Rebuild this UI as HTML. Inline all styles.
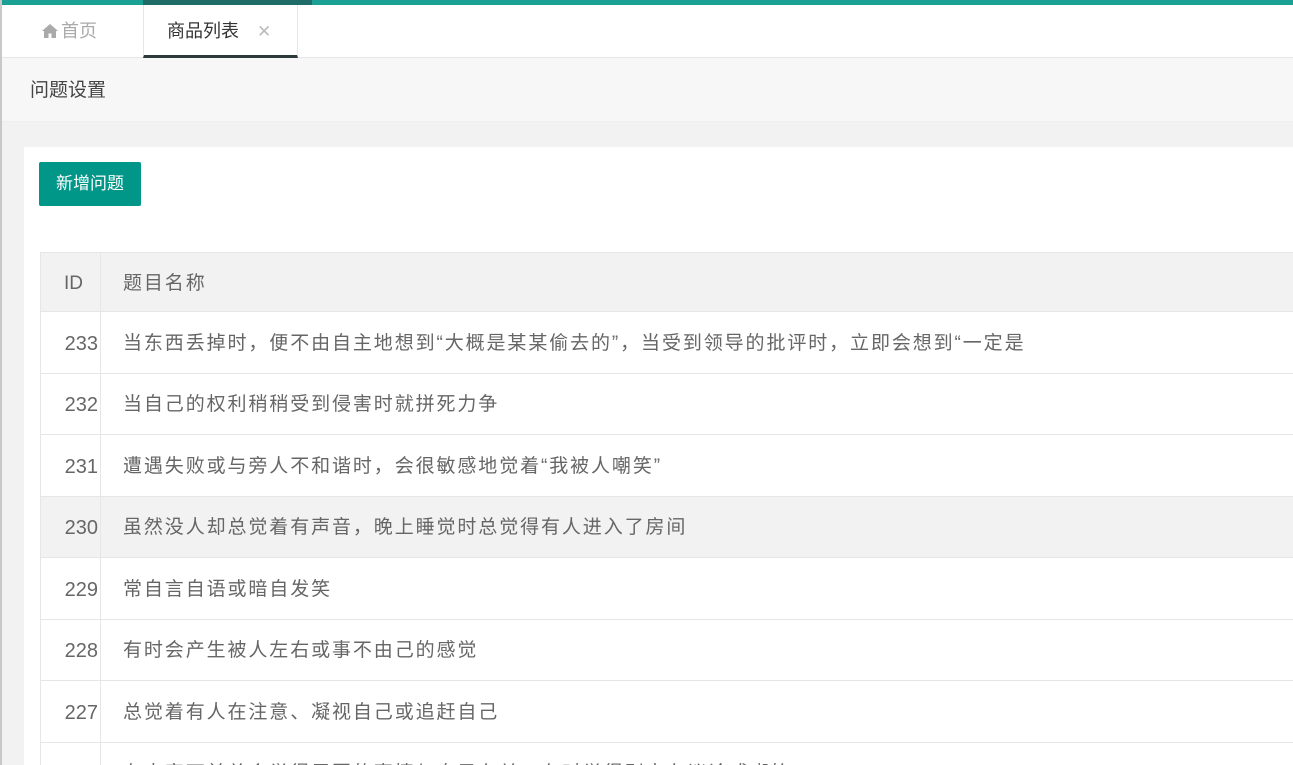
<!DOCTYPE html>
<html><head><meta charset="utf-8"><style>
*{margin:0;padding:0;box-sizing:border-box}
html,body{width:1293px;height:765px;overflow:hidden}
body{background:#f2f2f2;font-family:"Liberation Sans","Noto Sans CJK SC",sans-serif;color:#666;position:relative}
.lb{position:absolute;left:0;top:0;width:2px;height:765px;background:#c8c8c8;z-index:5}
.top{position:absolute;left:0;top:0;width:1293px;height:5px;background:#1aa094}
.top i{position:absolute;left:143px;top:0;width:169px;height:5px;background:#1f6b68}
.tabs{position:absolute;left:0;top:5px;width:1293px;height:53px;background:#fff;border-bottom:1px solid #e6e6e6}
.t1{position:absolute;left:42px;top:15px;font-size:18px;color:#aaa;line-height:22px}
.t1 svg{vertical-align:-1px;margin-right:3px}
.t2{position:absolute;left:143px;top:0;width:155px;height:53px;border-left:1px solid #e6e6e6;border-right:1px solid #e6e6e6;border-bottom:3px solid #2c3a3c}
.t2 span{position:absolute;left:23px;top:15px;font-size:18px;color:#333;line-height:22px}
.t2 b{position:absolute;left:113px;top:16px;font-size:17px;font-weight:normal;color:#bbb;line-height:22px}
.hd{position:absolute;left:0;top:58px;width:1293px;height:64px;background:#f7f7f7;border-bottom:1px solid #eee}
.hd span{position:absolute;left:30px;top:21px;font-size:19px;color:#444;line-height:24px}
.wrap{position:absolute;left:24px;top:147px;width:1269px;height:618px;background:#fff;overflow:hidden}
.btn{position:absolute;left:15px;top:15px;width:102px;height:44px;background:#009688;color:#fff;font-size:17px;line-height:44px;text-align:center;border-radius:2px}
table{position:absolute;left:16px;top:105px;width:1270px;border-collapse:collapse;font-size:19px;letter-spacing:1.9px}
td,th{border:1px solid #e6e6e6;height:61.5px;font-weight:normal;text-align:left;white-space:nowrap;overflow:hidden;vertical-align:middle;line-height:24px;padding-top:3px}
th{background:#f2f2f2;height:59px}
td:first-child,th:first-child{width:60px;text-align:right;padding-right:2px;letter-spacing:0;font-size:20px}
th:first-child{text-align:left;padding-left:23px;font-size:19px}
td:last-child,th:last-child{padding-left:22px}
tr.h td{background:#f2f2f2}
</style></head><body>
<div class="lb"></div>
<div class="top"><i></i></div>
<div class="tabs"><div class="t1"><svg width="16" height="14" viewBox="0 0 16 14"><path d="M8 0L0 7h2v7h4.5V9.5h3V14H14V7h2z" fill="#aaa"/></svg>首页</div><div class="t2"><span>商品列表</span><b>✕</b></div></div>
<div class="hd"><span>问题设置</span></div>
<div class="wrap">
<div class="btn">新增问题</div>
<table>
<tr><th>ID</th><th>题目名称</th></tr>
<tr><td>233</td><td>当东西丢掉时，便不由自主地想到“大概是某某偷去的”，当受到领导的批评时，立即会想到“一定是</td></tr>
<tr><td>232</td><td>当自己的权利稍稍受到侵害时就拼死力争</td></tr>
<tr><td>231</td><td>遭遇失败或与旁人不和谐时，会很敏感地觉着“我被人嘲笑”</td></tr>
<tr class="h"><td>230</td><td>虽然没人却总觉着有声音，晚上睡觉时总觉得有人进入了房间</td></tr>
<tr><td>229</td><td>常自言自语或暗自发笑</td></tr>
<tr><td>228</td><td>有时会产生被人左右或事不由己的感觉</td></tr>
<tr><td>227</td><td>总觉着有人在注意、凝视自己或追赶自己</td></tr>
<tr><td>226</td><td>在大家面前总会觉得周围的事情与自己有关，有时觉得别人在议论或嘲笑</td></tr>
</table>
</div>
</body></html>
